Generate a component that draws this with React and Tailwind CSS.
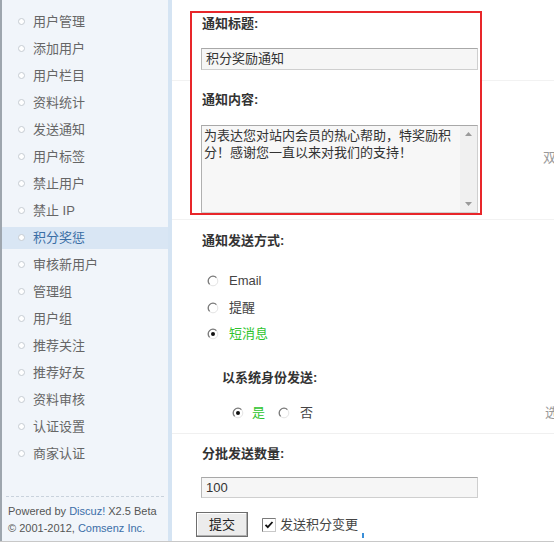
import React from "react";

const items = [
  "用户管理", "添加用户", "用户栏目", "资料统计", "发送通知", "用户标签", "禁止用户", "禁止 IP",
  "积分奖惩", "审核新用户", "管理组", "用户组", "推荐关注", "推荐好友", "资料审核", "认证设置", "商家认证",
];

function Radio({ checked }) {
  return (
    <svg width="12" height="12" viewBox="0 0 12 12" className="shrink-0">
      <circle cx="6" cy="6" r="4.8" fill="#fff" stroke="#e4e4e4" strokeWidth="1" />
      <path d="M9.4 2.6 A4.8 4.8 0 0 0 2.6 9.4" fill="none" stroke="#7a7a7a" strokeWidth="1.3" />
      {checked && <circle cx="6" cy="6" r="2" fill="#111" />}
    </svg>
  );
}

function Checkbox() {
  return (
    <svg width="14" height="14" viewBox="0 0 14 14" className="shrink-0">
      <rect x="0.5" y="0.5" width="13" height="13" fill="#fff" stroke="#c8c8c8" />
      <path d="M0.5 13.5 V0.5 H13.5" fill="none" stroke="#7a7a7a" />
      <path d="M3.5 6.8 L5.8 9.2 L10.5 4" fill="none" stroke="#111" strokeWidth="1.8" />
    </svg>
  );
}

export default function App() {
  const font = "font-['Liberation_Sans','Noto_Sans_CJK_SC',sans-serif]";
  return (
    <div className={`w-[554px] h-[542px] overflow-hidden flex bg-white border-b border-[#c8c8c8] ${font}`}>
      {/* Sidebar */}
      <div className="w-[172px] shrink-0 h-full flex bg-[#f1f5fa] border-l-2 border-[#9ea6ae]">
        <div className="flex-1 flex flex-col">
          <div className="pt-[8px] flex flex-col">
            {items.map((t) => {
              const active = t === "积分奖惩";
              return (
                <div key={t} className="h-[27px] flex items-center">
                  <div
                    className={`w-full h-[22px] flex items-center pl-[16px] ${active ? "bg-[#d9e6f4]" : ""}`}
                  >
                    <span className="w-[7px] h-[7px] rounded-full border border-[#c6ccd2] bg-white shrink-0" />
                    <span
                      className={`ml-[8px] text-[13px] leading-none whitespace-pre ${active ? "text-[#3a6ea5]" : "text-[#666]"}`}
                    >
                      {t}
                    </span>
                  </div>
                </div>
              );
            })}
          </div>
          <div className="mt-auto mb-[4px] mx-[4px] border-t border-dashed border-[#c9d2dc] pt-[6px] pl-[2px] text-[11px] leading-[17px] text-[#555] font-['Liberation_Sans',sans-serif]">
            <div>
              Powered by <span className="text-[#3b6ea8]">Discuz!</span> X2.5 Beta
            </div>
            <div>
              © 2001-2012, <span className="text-[#3b6ea8]">Comsenz Inc.</span>
            </div>
          </div>
        </div>
        <div className="w-[4px] h-full bg-[#d5e4f3]" />
      </div>

      {/* Main */}
      <div className="flex-1 h-full flex flex-col pl-[18px] relative">
        <div className="absolute left-0 right-0 top-[80px] border-t border-[#f2f2f2]" />
        {/* Red box row */}
        <div className="flex items-start mt-[11px]">
          <div className="w-[292px] h-[204px] border-2 border-[#e8262a] pl-[10px] flex flex-col overflow-hidden bg-white relative">
            <div className="h-[20px] mt-[1px] flex items-center text-[13px] font-bold text-[#333]">通知标题:</div>
            <div className="ml-[-1px] mt-[14px] w-[277px] h-[22px] bg-[#f6f6f6] border border-[#cfcfcf] border-t-[#a8a8a8] border-l-[#b8b8b8] flex items-center pl-[4px] text-[13px] text-[#333]">
              积分奖励通知
            </div>
            <div className="h-[20px] mt-[20px] flex items-center text-[13px] font-bold text-[#333]">通知内容:</div>
            <div className="ml-[-1px] mt-[15px] w-[277px] h-[88px] bg-[#f7f7f7] border border-[#cfcfcf] border-t-[#a8a8a8] border-l-[#b0b0b0] flex">
              <div className="flex-1 pl-[2px] pt-[1px] text-[13px] leading-[17px] text-[#333] whitespace-nowrap overflow-hidden">
                为表达您对站内会员的热心帮助，特奖励积
                <br />
                分！感谢您一直以来对我们的支持！
              </div>
              <div className="w-[17px] h-full bg-[#f0f0f0] flex flex-col items-center justify-between pt-[6px] pb-[6px]">
                <svg width="7" height="4" viewBox="0 0 7 4"><path d="M0 4 L3.5 0 L7 4 Z" fill="#9a9a9a" /></svg>
                <svg width="7" height="4" viewBox="0 0 7 4"><path d="M0 0 L3.5 4 L7 0 Z" fill="#9a9a9a" /></svg>
              </div>
            </div>
          </div>
          <div className="ml-[61px] mt-[137px] text-[13px] text-[#999] whitespace-nowrap">双</div>
        </div>
        <div className="border-t border-[#f2f2f2] mt-[4px] ml-[-18px]" />

        <div className="mt-[11px] ml-[12px] h-[20px] flex items-center text-[13px] font-bold text-[#333]">通知发送方式:</div>

        <div className="mt-[16px] ml-[17px] flex flex-col text-[13px] text-[#444]">
          <div className="h-[27px] flex items-center gap-[10px]"><Radio /><span className="font-['Liberation_Sans',sans-serif]">Email</span></div>
          <div className="h-[27px] flex items-center gap-[10px]"><Radio /><span>提醒</span></div>
          <div className="h-[26px] flex items-center gap-[10px]"><Radio checked /><span className="text-[#2ec42e]">短消息</span></div>
        </div>

        <div className="mt-[21px] ml-[32px] h-[20px] flex items-center text-[13px] font-bold text-[#333]">以系统身份发送:</div>

        <div className="mt-[15px] h-[20px] flex items-center text-[13px] text-[#444]">
          <div className="ml-[42px] flex items-center gap-[8px]"><Radio checked /><span className="text-[#2ec42e]">是</span></div>
          <div className="ml-[13px] flex items-center gap-[10px]"><Radio /><span>否</span></div>
          <div className="ml-auto w-[11px] whitespace-nowrap text-[#999]">选</div>
        </div>
        <div className="border-t border-[#f0f0f0] mt-[10px] ml-[-18px]" />

        <div className="mt-[10px] ml-[12px] h-[20px] flex items-center text-[13px] font-bold text-[#333]">分批发送数量:</div>

        <div className="mt-[13px] ml-[11px] w-[277px] h-[21px] bg-[#f6f6f6] border border-[#cfcfcf] border-t-[#a8a8a8] border-l-[#b8b8b8] flex items-center pl-[4px] text-[13px] text-[#333]">
          100
        </div>

        <div className="mt-[14px] ml-[6px] flex items-center">
          <div className="w-[52px] h-[25px] border border-[#6e6e6e] bg-[#ececec] shadow-[inset_-1px_-1px_0_#b0b0b0,inset_1px_1px_0_#fff] flex items-center justify-center text-[13px] text-[#222]">
            提交
          </div>
          <div className="ml-[14px] flex items-center gap-[4px]">
            <Checkbox />
            <span className="text-[13px] text-[#444]">发送积分变更</span>
            <span className="w-[2px] h-[5px] bg-[#3a8fd8] self-end mb-[-4px]" />
          </div>
        </div>
      </div>
    </div>
  );
}
